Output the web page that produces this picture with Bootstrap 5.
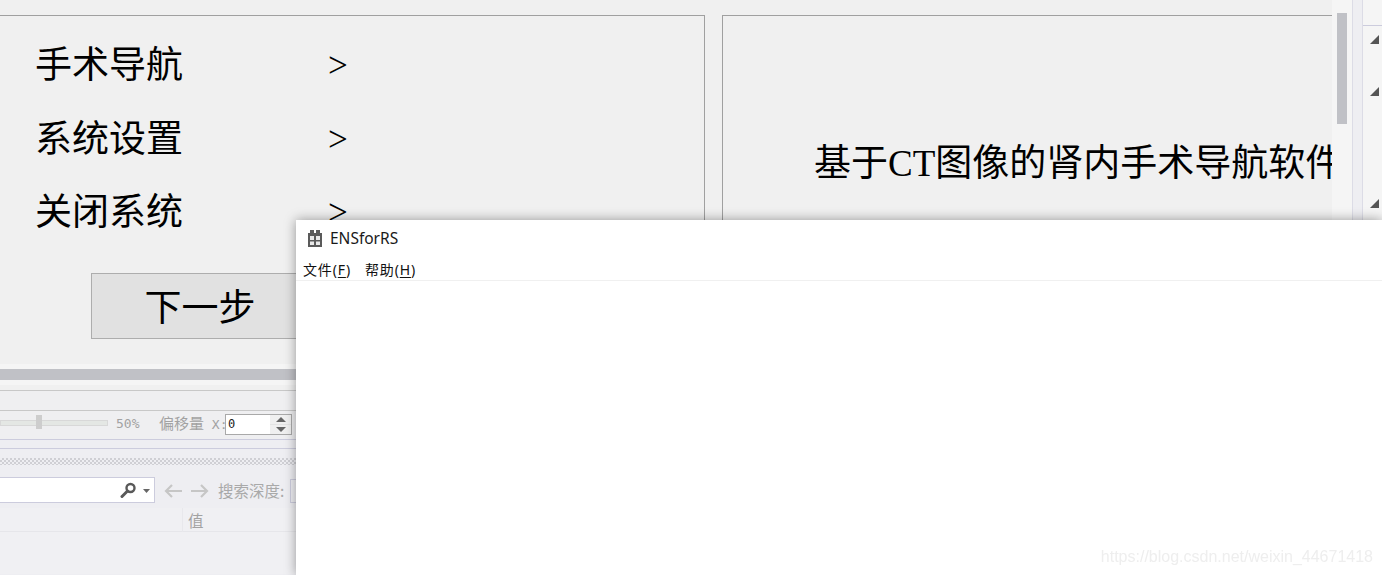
<!DOCTYPE html>
<html lang="zh">
<head>
<meta charset="utf-8">
<link href="https://cdn.jsdelivr.net/npm/bootstrap@5.3.0/dist/css/bootstrap.min.css" rel="stylesheet">
<style>
html,body{margin:0;height:575px;overflow:hidden;background:#f0f0f0}
.desk{height:575px;width:1382px;position:relative;overflow:hidden;font-family:"Liberation Serif","Noto Sans CJK SC",serif;color:#000}
.main-col{width:1352px;flex:none}
.upper{height:364px;background:#f0f0f0}
.pane-l{width:705px;height:349px;margin:15px 17px 0 0;border:1px solid #a0a0a0;border-left:0;border-bottom:0;flex:none;padding-top:25px}
.pane-r{flex:1 1 auto;height:349px;margin-top:15px;border:1px solid #a0a0a0;border-right:0;border-bottom:0;overflow:hidden;white-space:nowrap;min-width:0;padding:123px 0 0 91px;font-size:37px;line-height:50px}
.vscroll{width:20px;flex:none;background:#f5f5f5;padding:13px 5px 0}
.vthumb{height:111px;background:#c0c1c6}
.menu-row{height:73.5px;font-size:37px;line-height:50px;padding:0 0 0 35px;display:flex}
.menu-name{width:293px}
.arrow-mark{font-size:35px}
.next-btn{margin:11px 0 0 91px;width:218px;height:66px;background:#e1e1e1;border:1px solid #adadad;font-size:37px;line-height:70px;text-align:center}
.gap-light{height:5px;background:#f5f5f5}
.splitter{height:11px;background:#c0c1c6}
.lower{height:195px;background:#eeeef2;font-family:"DejaVu Sans Mono","Noto Sans CJK SC",monospace;color:#a2a2a2;font-size:15px}
.strip-a{height:11px;background:linear-gradient(#f5f5f5 5px,#f0f0f0 5px);border-bottom:1px solid #c8c8c8}
.strip-b{height:20px;background:#efeff1;border-bottom:1px solid #c8c8c8}
.tools{height:29px;background:#efeff1;border-bottom:1px solid #ccccdd;position:relative;padding:0 0 2px 116px}
.slide{position:absolute;left:0;top:9px;width:108px;height:6px;background:#e4e7e4;border:1px solid #d8d8d8}
.slide-knob{position:absolute;left:36px;top:4px;width:6px;height:14px;background:#cdcdcd}
.pct{font-size:13px;width:43px}
.lab{width:66px;white-space:nowrap;font-size:13px}
.lab b{font-weight:400;font-size:15px}
.spin{width:67px;height:21px;border:1px solid #a9a9a9;background:#fff;color:#222;font-size:12px;line-height:19px;padding-left:2px;position:relative}
.spin-btn{position:absolute;right:0;top:0;width:21px;height:19px;background:#e4e4e4;display:flex;flex-direction:column;gap:1px}
.spin-btn span{flex:1;display:flex;align-items:center;justify-content:center;background:#f0f0f0}
.strip-c{height:9px;border-bottom:1px solid #ccccdd}
.strip-d{height:9px}
.dots{height:7px;background-image:conic-gradient(#cfcfd4 25%,#eeeef2 0 50%,#cfcfd4 0 75%,#eeeef2 0);background-size:4px 4px}
.strip-e{height:12px}
.searchbar{height:26px;gap:9px}
.searchbox{width:155px;height:26px;background:#fff;border:1px solid #ccccdd;border-left:0;flex:none;position:relative}
.nav-arrow{margin-top:2px}
.find-lab{width:63px;margin-top:2px;color:#a9a9a9;white-space:nowrap;font-size:15.5px;font-family:"Noto Sans CJK SC",sans-serif}
.small-box{width:40px;height:24px;margin-top:2px;border:1px solid #ccccdd;flex:none}
.grid-head{margin-top:5px;height:24px;background:#f0f0f3;border-bottom:1px solid #e6e6ea;position:relative;padding-left:188px;line-height:24px;font-size:15.5px;font-family:"Noto Sans CJK SC",sans-serif}
.head-sep{position:absolute;left:182px;top:0;width:1px;height:24px;background:#e8e8ec}
.grid-body{height:42px;background:#f0f0f3}
.side-a{width:11px;flex:none;background:#eeeef2;border-left:1px solid #dcdce6;border-right:1px solid #dcdce6}
.side-b{width:19px;flex:none;background:#f5f5f5}
.side-head{height:26px;border-bottom:1px solid #ccccdd}
.tri{display:block;margin-left:7px}
.tri-1{margin-top:9px}
.tri-2{margin-top:43px}
.tri-3{margin-top:103px}
.app-win{position:absolute;left:296px;top:220px;width:1086px;height:355px;background:#fff;box-shadow:0 0 11px rgba(0,0,0,.38);font-family:"Noto Sans","Noto Sans CJK SC",sans-serif}
.app-title{height:36px;padding:1px 0 0 11px;gap:7px;font-size:15.5px;color:#1a1a1a}
.app-menu{height:25px;border-bottom:1px solid #f0f0f0;padding:2px 0 0 7px;gap:14px;font-size:14px;letter-spacing:.85px;color:#111}
.app-menu u{text-underline-offset:2px}
.mark-text{position:absolute;right:9px;bottom:9px;font:16px "Liberation Sans",sans-serif;color:#eee;filter:blur(.5px);white-space:nowrap}
</style>
</head>
<body>
<div class="desk d-flex">
  <div class="main-col d-flex flex-column">
    <div class="upper d-flex">
      <div class="pane-l">
        <div class="menu-row"><span class="menu-name">手术导航</span><span class="arrow-mark">&gt;</span></div>
        <div class="menu-row"><span class="menu-name">系统设置</span><span class="arrow-mark">&gt;</span></div>
        <div class="menu-row"><span class="menu-name">关闭系统</span><span class="arrow-mark">&gt;</span></div>
        <div class="next-btn">下一步</div>
      </div>
      <div class="pane-r">基于CT图像的肾内手术导航软件</div>
      <div class="vscroll"><div class="vthumb"></div></div>
    </div>
    <div class="gap-light"></div>
    <div class="splitter"></div>
    <div class="lower">
      <div class="strip-a"></div>
      <div class="strip-b"></div>
      <div class="tools d-flex align-items-center">
        <div class="slide"></div><div class="slide-knob"></div>
        <span class="pct">50%</span><span class="lab"><b>偏移量</b> X:</span>
        <div class="spin">0<div class="spin-btn">
          <span><svg width="10" height="5" viewBox="0 0 10 5"><path d="M5 0 10 5H0z" fill="#666"/></svg></span>
          <span><svg width="10" height="5" viewBox="0 0 10 5"><path d="M0 0H10L5 5z" fill="#666"/></svg></span>
        </div></div>
      </div>
      <div class="strip-c"></div>
      <div class="strip-d"></div>
      <div class="dots"></div>
      <div class="strip-e"></div>
      <div class="searchbar d-flex align-items-center">
        <div class="searchbox">
          <svg class="position-absolute" style="left:120px;top:4px" width="17" height="17" viewBox="0 0 17 17"><circle cx="10.500" cy="6" r="4" fill="none" stroke="#595959" stroke-width="2.4"/><path d="M7.500 9 2 14.500" stroke="#595959" stroke-width="3" stroke-linecap="round"/></svg>
          <svg class="position-absolute" style="left:143px;top:11px" width="7" height="4" viewBox="0 0 7 4"><path d="M0 0H7L3.500 4z" fill="#666"/></svg>
        </div>
        <svg class="nav-arrow" width="18" height="14" viewBox="0 0 18 14" fill="none" stroke="#c6c6c6" stroke-width="2.2"><path d="M8 1 2 7l6 6M2 7H18"/></svg>
        <svg class="nav-arrow" width="18" height="14" viewBox="0 0 18 14" fill="none" stroke="#c6c6c6" stroke-width="2.2"><path d="M10 1l6 6-6 6M16 7H0"/></svg>
        <span class="find-lab">搜索深度:</span><div class="small-box"></div>
      </div>
      <div class="grid-head"><div class="head-sep"></div>值</div>
      <div class="grid-body"></div>
    </div>
  </div>
  <div class="side-a"></div>
  <div class="side-b">
    <div class="side-head"></div>
    <svg class="tri tri-1" width="9" height="9" viewBox="0 0 9 9"><path d="M9 0V9H0z" fill="#555"/></svg>
    <svg class="tri tri-2" width="9" height="9" viewBox="0 0 9 9"><path d="M9 0V9H0z" fill="#555"/></svg>
    <svg class="tri tri-3" width="9" height="9" viewBox="0 0 9 9"><path d="M9 0V9H0z" fill="#555"/></svg>
  </div>

  <div class="app-win">
    <div class="app-title d-flex align-items-center">
      <svg width="16" height="17" viewBox="0 0 16 17"><path d="M3 0h4v3h2V0h4v3h2v14H1V3h2z" fill="#5a5a5a"/><path d="M3 6h4v4H3zM9 6h4v4H9zM3 11.500h4V15H3zM9 11.500h4V15H9z" fill="#e9e9e9"/></svg>
      <span>ENSforRS</span>
    </div>
    <div class="app-menu d-flex align-items-center">
      <span>文件(<u>F</u>)</span><span>帮助(<u>H</u>)</span>
    </div>
    <div class="mark-text">https://blog.csdn.net/weixin_44671418</div>
  </div>
</div>
<script src="https://cdn.jsdelivr.net/npm/bootstrap@5.3.0/dist/js/bootstrap.bundle.min.js"></script>
</body>
</html>
